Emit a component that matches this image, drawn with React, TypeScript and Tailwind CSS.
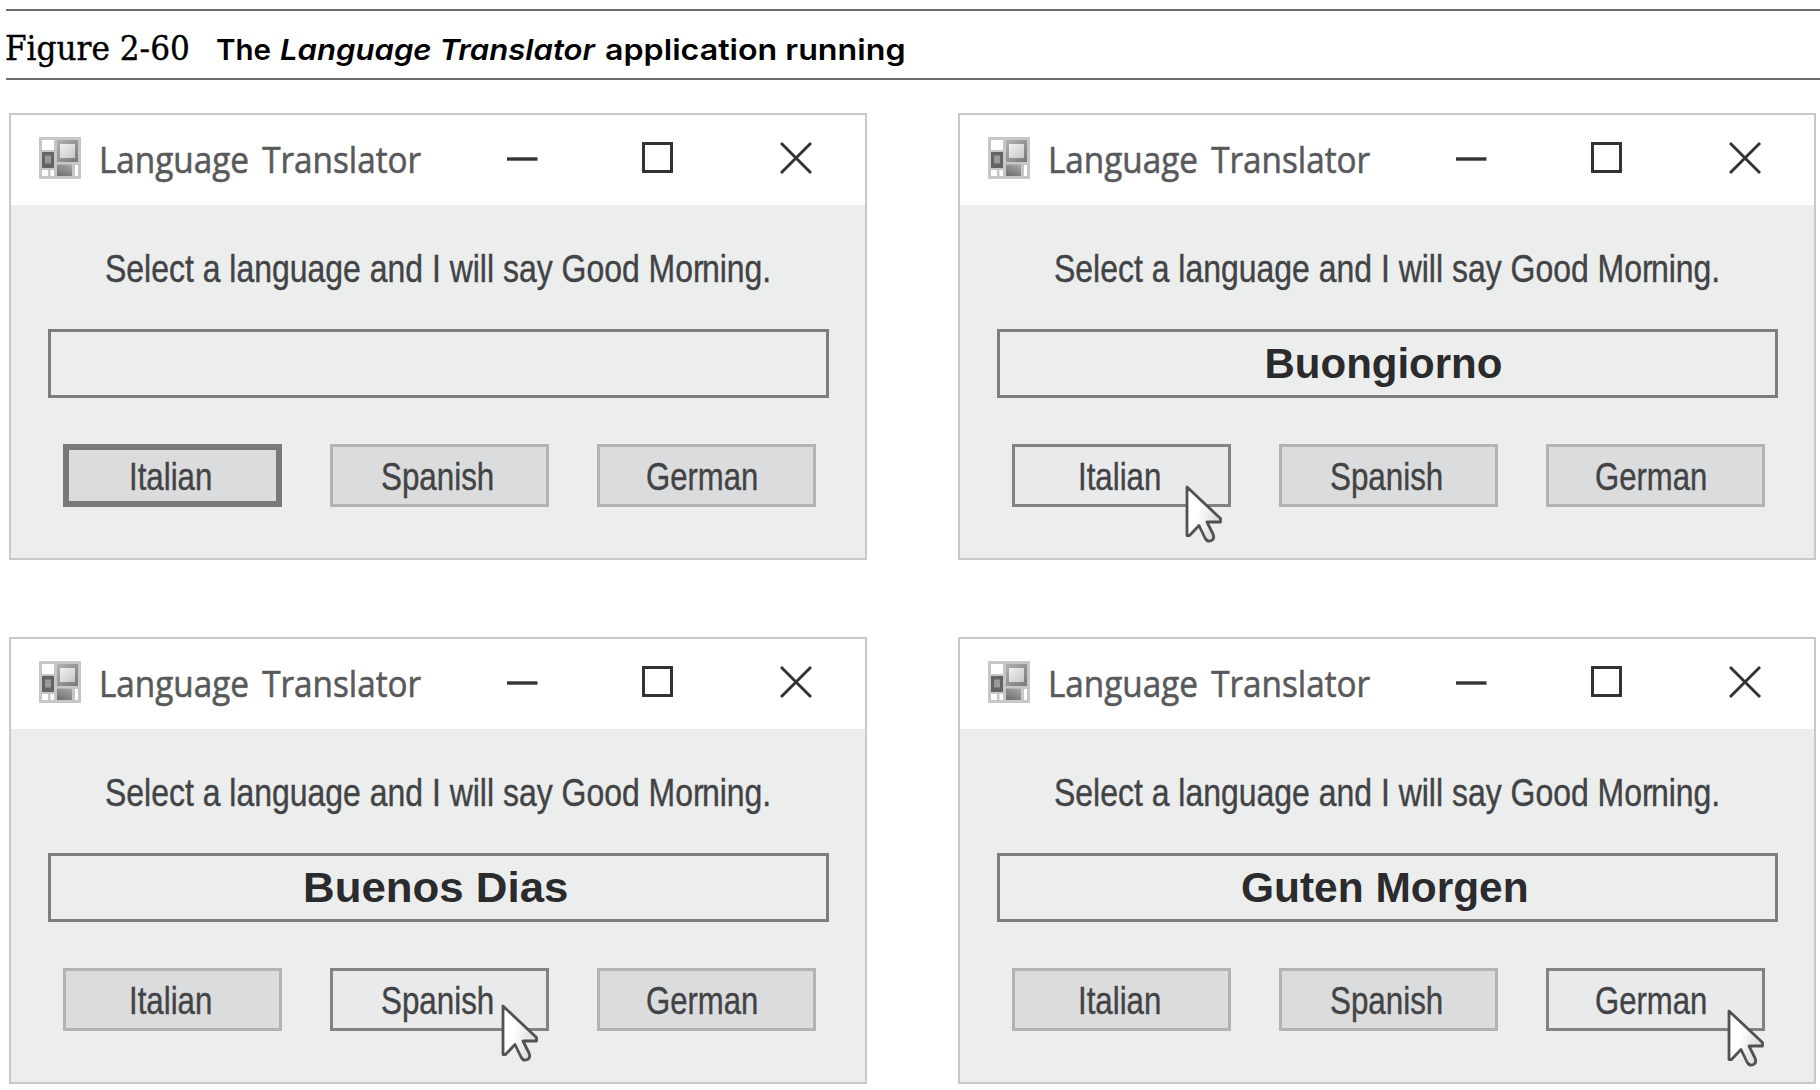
import { useLayoutEffect, useRef, useState } from "react";
import type { ReactNode } from "react";

/** Text squeezed or stretched horizontally so that it fills its box. */
function FitText({ className, textClass = "", children }: { className: string; textClass?: string; children: ReactNode }) {
  const box = useRef<HTMLSpanElement>(null);
  const text = useRef<HTMLSpanElement>(null);
  const [scale, setScale] = useState(1);
  useLayoutEffect(() => {
    if (box.current && text.current) {
      setScale(box.current.offsetWidth / text.current.offsetWidth);
    }
  }, []);
  return (
    <span ref={box} className={`block shrink-0 ${className}`}>
      <span
        ref={text}
        className={`inline-block origin-left whitespace-nowrap align-top ${textClass}`}
        style={{ transform: `scaleX(${scale})` }}
      >
        {children}
      </span>
    </span>
  );
}

function FormIcon() {
  return (
    <svg width="42" height="42" viewBox="0 0 42 42" className="block shrink-0">
      <defs>
        <linearGradient id="pane" x1="0" y1="0" x2="1" y2="1">
          <stop offset="0" stopColor="#f1f2f2" />
          <stop offset="1" stopColor="#c4c6c8" />
        </linearGradient>
        <linearGradient id="frame" x1="0" y1="0" x2="1" y2="1">
          <stop offset="0" stopColor="#b0b2b4" />
          <stop offset="1" stopColor="#77797b" />
        </linearGradient>
        <linearGradient id="block" x1="1" y1="0" x2="0.4" y2="1">
          <stop offset="0" stopColor="#a7a9ab" />
          <stop offset="1" stopColor="#737577" />
        </linearGradient>
      </defs>
      <rect width="42" height="42" fill="#c5c7c8" />
      <rect x="3" y="3" width="12" height="10" fill="#fff" />
      <rect x="3" y="33" width="6" height="6" fill="#fff" />
      <rect x="11.5" y="33" width="3.5" height="6" fill="#fff" />
      <rect x="36" y="28" width="3" height="11" fill="#fff" />
      <rect x="18" y="3" width="21" height="22" fill="url(#frame)" />
      <rect x="21" y="7" width="15" height="14" fill="url(#pane)" />
      <rect x="3" y="15" width="12" height="16" fill="#636466" />
      <rect x="6" y="18.5" width="6" height="8" fill="#97999b" />
      <rect x="18" y="27.5" width="15" height="11.5" fill="url(#block)" />
    </svg>
  );
}

function WindowControls() {
  return (
    <div className="ml-auto flex items-center pr-[53px]">
      <svg width="32" height="32" viewBox="0 0 32 32" className="mr-[104px]" stroke="#333335" strokeWidth="3.4">
        <path d="M1 17H31.5" />
      </svg>
      <svg width="32" height="32" viewBox="0 0 32 32" className="mr-[106px]" stroke="#333335" strokeWidth="3" fill="none">
        <rect x="1.5" y="1.5" width="28" height="28" />
      </svg>
      <svg width="32" height="32" viewBox="0 0 32 32" stroke="#333335" strokeWidth="2.9">
        <path d="M1 1L31 31M31 1L1 31" />
      </svg>
    </div>
  );
}

function Pointer({ className }: { className: string }) {
  return (
    <svg width="40" height="62" viewBox="0 0 40 62" className={`absolute ${className}`}>
      <defs>
        <linearGradient id="pointer" x1="0" y1="0.4" x2="1" y2="0.8">
          <stop offset="0.3" stopColor="#fff" />
          <stop offset="0.8" stopColor="#dfe0e1" />
        </linearGradient>
      </defs>
      <path
        d="M2 3V51.5H4.5L14 41.5L20 54Q22.5 58.5 26.5 56.5Q30 54.5 28 50L22 38H35.5V34.5Z"
        fill="url(#pointer)"
        stroke="#515254"
        strokeWidth="2.8"
        strokeLinejoin="round"
      />
    </svg>
  );
}

type State = "normal" | "focused" | "hover";

const buttonStyles: Record<State, string> = {
  normal: "border-[3px] border-[#b1b3b5] bg-[#dbdcde]",
  focused: "border-[6px] border-[#77797b] bg-[#dbdcde]",
  hover: "border-[3px] border-[#808284] bg-[#e9eaec]",
};

const languages = [
  { name: "Italian", width: "w-[83px] -ml-[5px]" },
  { name: "Spanish", width: "w-[113px] -ml-[5px]" },
  { name: "German", width: "w-[112px] -ml-[9px]" },
];

interface FormProps {
  greeting?: ReactNode;
  active: string;
  state: State;
  pointer?: string;
}

function TranslatorForm({ greeting, active, state, pointer }: FormProps) {
  return (
    <section className="relative h-[447px] w-[858px] border-2 border-[#c7c9ca] bg-[#ebeeed] font-['Liberation_Sans',sans-serif]">
      <header className="flex h-[90px] items-center bg-white pb-[4px] pl-[28px]">
        <FormIcon />
        <FitText
          className="ml-[18px] mt-[2px] w-[322px]"
          textClass="font-['Open_Sans',sans-serif] text-[37px] leading-[52px] text-[#58595b] [word-spacing:5px] [-webkit-text-stroke:0.6px_#58595b]"
        >
          Language Translator
        </FitText>
        <WindowControls />
      </header>
      <div className="flex h-[124px] items-center pl-[94px] pt-[4px]">
        <FitText
          className="w-[666px]"
          textClass="text-[38px] leading-[46px] text-[#434345] [-webkit-text-stroke:0.4px_#434345]"
        >
          Select a language and I will say Good Mo<span className="-tracking-[2px]">r</span>ning.
        </FitText>
      </div>
      <div className="ml-[37px] flex h-[69px] w-[781px] items-center justify-center border-[3px] border-[#7b7d7f] text-[42px] font-bold leading-[50px] text-[#2b2a2c]">
        {greeting}
      </div>
      <div className="mt-[46px] flex gap-[48px] pl-[52px]">
        {languages.map(({ name, width }) => (
          <button
            key={name}
            type="button"
            className={`flex h-[63px] w-[219px] items-center justify-center ${buttonStyles[name === active ? state : "normal"]}`}
          >
            <FitText
              className={`mt-[2px] ${width}`}
              textClass="text-[38px] leading-[46px] text-[#434345] [-webkit-text-stroke:0.4px_#434345]"
            >
              {name}
            </FitText>
          </button>
        ))}
      </div>
      {pointer && <Pointer className={pointer} />}
    </section>
  );
}

export default function App() {
  return (
    <main className="h-[1090px] w-[1820px] overflow-hidden bg-white">
      <div className="ml-[6px] mt-[9px] flex h-[71px] items-center border-y-2 border-[#6d6c6e] text-black">
        <FitText
          className="-ml-[1px] mt-[9px] w-[185px]"
          textClass="font-['DejaVu_Serif',serif] text-[33px] leading-[40px] [-webkit-text-stroke:0.4px_#000]"
        >
          Figure 2-60
        </FitText>
        <div className="ml-[26px] mt-[11px] flex gap-[10px] font-['Inter',sans-serif] text-[29px] font-semibold leading-[36px]">
          <FitText className="w-[55px]">The</FitText>
          <FitText className="-ml-[1px] w-[315px]" textClass="italic">
            Language Translator
          </FitText>
          <FitText className="w-[301px]">application running</FitText>
        </div>
      </div>
      <div className="ml-[9px] mt-[33px] grid grid-cols-[858px_858px] gap-x-[91px] gap-y-[77px]">
        <TranslatorForm active="Italian" state="focused" />
        <TranslatorForm
          active="Italian"
          state="hover"
          pointer="left-[225px] top-[369px]"
          greeting={<FitText className="w-[238px] -ml-[8px]">Buongiorno</FitText>}
        />
        <TranslatorForm
          active="Spanish"
          state="hover"
          pointer="left-[490px] top-[364px]"
          greeting={<FitText className="w-[265px] -ml-[6px]">Buenos Dias</FitText>}
        />
        <TranslatorForm
          active="German"
          state="hover"
          pointer="left-[767px] top-[369px]"
          greeting={<FitText className="w-[288px] -ml-[6px]">Guten Morgen</FitText>}
        />
      </div>
    </main>
  );
}
